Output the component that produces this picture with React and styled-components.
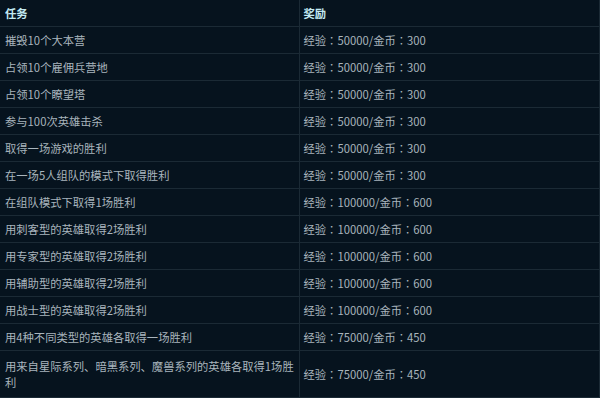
import React from 'react'
import styled, { createGlobalStyle } from 'styled-components'

const GlobalStyle = createGlobalStyle`
  html, body {
    margin: 0;
    padding: 0;
    background: #06131e;
  }
`

const Table = styled.table`
  width: 600px;
  border-collapse: collapse;
  table-layout: fixed;
  font-family: "Noto Sans CJK SC", "Noto Sans", sans-serif;
  font-size: 11.3px;
  color: #a9b5bd;
  background: #06131e;
`

const Head = styled.th`
  height: 26px;
  padding: 0 0 0 ${p => p.$pad}px;
  text-align: left;
  font-weight: 700;
  color: #c3eaf3;
  border: 1px solid #1b2a35;
  border-top: none;
  border-left: none;
`

const Cell = styled.td`
  height: ${p => (p.$tall ? 46 : 26)}px;
  padding: 0 4px 0 ${p => p.$pad}px;
  line-height: 16px;
  border: 1px solid #1b2a35;
  border-left: none;
  vertical-align: middle;
  font-family: ${p => (p.$reward ? '"Noto Sans CJK TC", "Noto Sans", sans-serif' : 'inherit')};
`

// 最后一行在“胜”与“利”之间换行，与原图一致
const rows = [
  [['摧毁10个大本营'], '经验：50000/金币：300'],
  [['占领10个雇佣兵营地'], '经验：50000/金币：300'],
  [['占领10个瞭望塔'], '经验：50000/金币：300'],
  [['参与100次英雄击杀'], '经验：50000/金币：300'],
  [['取得一场游戏的胜利'], '经验：50000/金币：300'],
  [['在一场5人组队的模式下取得胜利'], '经验：50000/金币：300'],
  [['在组队模式下取得1场胜利'], '经验：100000/金币：600'],
  [['用刺客型的英雄取得2场胜利'], '经验：100000/金币：600'],
  [['用专家型的英雄取得2场胜利'], '经验：100000/金币：600'],
  [['用辅助型的英雄取得2场胜利'], '经验：100000/金币：600'],
  [['用战士型的英雄取得2场胜利'], '经验：100000/金币：600'],
  [['用4种不同类型的英雄各取得一场胜利'], '经验：75000/金币：450'],
  [['用来自星际系列、暗黑系列、魔兽系列的英雄各取得1场胜', '利'], '经验：75000/金币：450'],
]

export default function App() {
  return (
    <>
      <GlobalStyle />
      <Table>
        <colgroup>
          <col style={{ width: 299 }} />
          <col />
        </colgroup>
        <thead>
          <tr>
            <Head $pad={5}>任务</Head>
            <Head $pad={4}>奖励</Head>
          </tr>
        </thead>
        <tbody>
          {rows.map(([task, reward], i) => (
            <tr key={i}>
              <Cell $pad={5} $tall={task.length > 1}>
                {task.map((line, j) => (
                  <React.Fragment key={j}>
                    {j > 0 && <br />}
                    {line}
                  </React.Fragment>
                ))}
              </Cell>
              <Cell $pad={4} $reward $tall={task.length > 1}>{reward}</Cell>
            </tr>
          ))}
        </tbody>
      </Table>
    </>
  )
}
